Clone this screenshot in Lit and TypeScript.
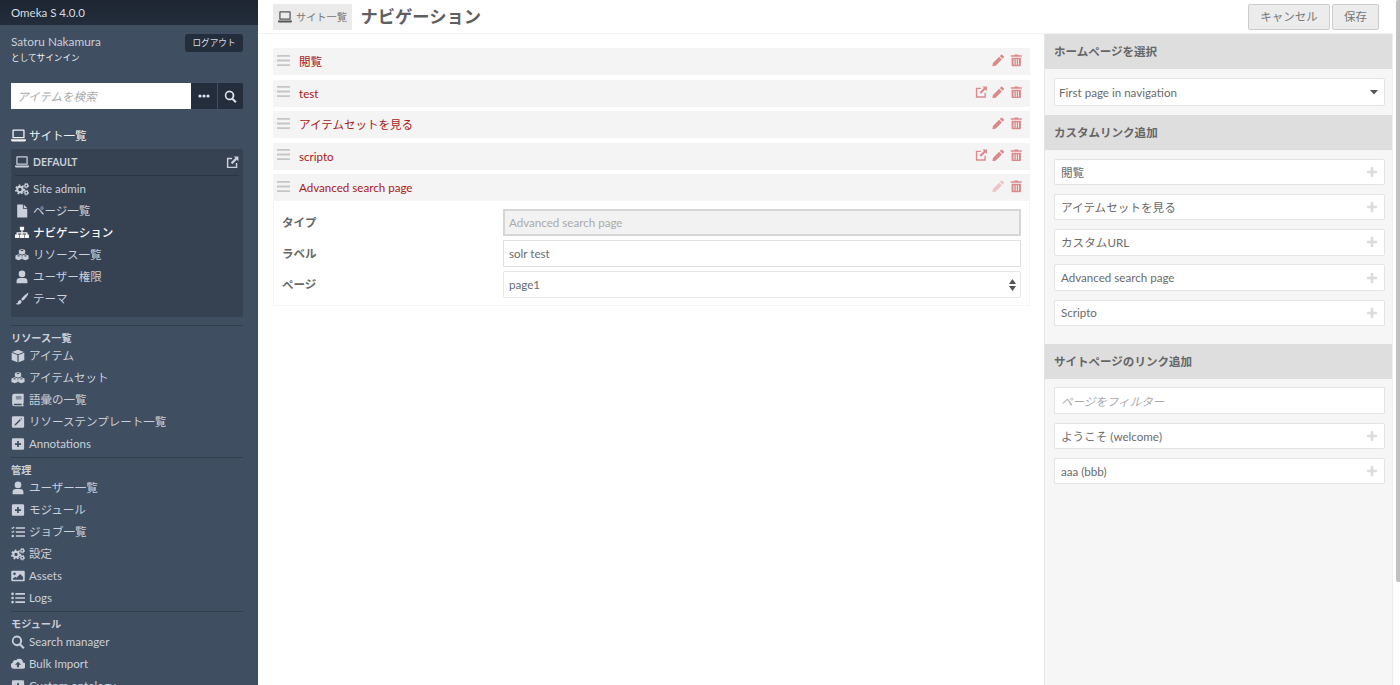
import { LitElement, html, css, svg } from "lit";
import { customElement } from "lit/decorators.js";

const I: Record<string, any> = {
  laptop: svg`<path fill-rule="evenodd" d="M2.500 1.500h11a1 1 0 0 1 1 1V11h-13V2.500a1 1 0 0 1 1-1zm.4 1.400v6.700h10.200V2.900zM0 12h16v.8a1.500 1.500 0 0 1-1.500 1.500H1.500A1.500 1.500 0 0 1 0 12.800z"/>`,
  ext: svg`<path fill="none" stroke="currentColor" stroke-width="1.800" d="M7.500 3H2v11h11V8.500"/><path d="M9.500 .7H15.300v5.800l-2-2-5.500 5.500-1.900-1.900 5.500-5.500z"/>`,
  cogs: svg`<circle cx="5.700" cy="8.600" r="3.100" fill="none" stroke="currentColor" stroke-width="2.400"/><circle cx="5.700" cy="8.600" r="4.700" fill="none" stroke="currentColor" stroke-width="2" stroke-dasharray="2 2"/><circle cx="12.900" cy="4.200" r="1.700" fill="none" stroke="currentColor" stroke-width="1.500"/><circle cx="12.900" cy="4.200" r="2.700" fill="none" stroke="currentColor" stroke-width="1.100" stroke-dasharray="1.200 1.200"/><circle cx="12.900" cy="12.200" r="1.700" fill="none" stroke="currentColor" stroke-width="1.500"/><circle cx="12.900" cy="12.200" r="2.700" fill="none" stroke="currentColor" stroke-width="1.100" stroke-dasharray="1.200 1.200"/>`,
  file: svg`<path d="M2.500 .5h6.500v5h5V15.500H2.500zM10 .5l4 4h-4z"/>`,
  sitemap: svg`<path d="M5.600 .8h4.800v4H8.700v2.200h5.500v2.600h1.800v4H11v-4h1.700V8.500H8.700v1.100h1.700v4H5.600v-4h1.700V8.500H3.300v1.100H5v4H0v-4h1.800V7h5.500V4.800H5.600z"/>`,
  cubes: svg`<path fill-rule="evenodd" d="M8 1l3.600 1.400v3.800L8 7.600 4.400 6.200V2.400zM6 2.800L8 3.600l2-.8L8 2zM4.200 7.200l3.600 1.400v3.900l-3.600 1.400L.5 12.500V8.600zM2.200 9l2 .8 2-.8-2-.8zM11.800 7.200l3.700 1.400v3.900l-3.700 1.400-3.600-1.400V8.600zM9.800 9l2 .8 2-.8-2-.8z"/>`,
  user: svg`<circle cx="8" cy="4.500" r="3.800"/><path d="M1.800 15.200v-2.400A3.800 3.800 0 0 1 5.600 9h4.800a3.800 3.800 0 0 1 3.800 3.800v2.400z"/>`,
  brush: svg`<path d="M15.200 .8c-1.800.7-6.300 4.500-8.200 7.500l1.800 1.700C11.800 7.700 15.900 2.400 15.200 .8zM6.200 9C4.300 9.100 3.500 10.400 3.200 11.900c-.2.900-1.100 1.300-2.200 1.400 1.500 1.700 6 1.800 6.700-2.600z"/>`,
  cube: svg`<path d="M8 .8l6.800 2.500L8 5.900 1.200 3.300zM.8 4.300l6.500 2.600v8.300L.8 12.600zM15.200 4.300v8.300l-6.500 2.600V6.900z"/>`,
  book: svg`<path fill-rule="evenodd" d="M4 .8h10.500v10.500c0 .5-.3.700-.6.800v1.700c.3.200.6.500.6.900v.5H4A2.700 2.700 0 0 1 1.300 12.500V3.500A2.700 2.700 0 0 1 4 .8zm1.500 3.200v1h6.500V4zm0 2.200v1h6.500v-1zM4 12.200a.9.900 0 0 0 0 1.800h8.200v-1.800z"/>`,
  tmpl: svg`<path fill-rule="evenodd" d="M2.500 1.500h11A1.500 1.500 0 0 1 15 3v10a1.500 1.500 0 0 1-1.500 1.500h-11A1.500 1.500 0 0 1 1 13V3a1.500 1.500 0 0 1 1.500-1.500zM10 4.800L4.300 10.500 4 12l1.500-.3 5.700-5.700zM10.800 4l1.200 1.200.7-.7-1.200-1.200z"/>`,
  plus: svg`<path fill-rule="evenodd" d="M2.500 1.500h11A1.500 1.500 0 0 1 15 3v10a1.500 1.500 0 0 1-1.500 1.500h-11A1.500 1.500 0 0 1 1 13V3a1.500 1.500 0 0 1 1.500-1.500zM7 4.500V7H4.500v2H7v2.500h2V9h2.500V7H9V4.500z"/>`,
  tasks: svg`<path d="M5.500 2.600H16v1.800H5.500zM5.500 7.100H16v1.800H5.500zM5.500 11.600H16v1.800H5.500zM.3 3.300l.9-.7.500.6L3.300 1.700l.8.800-2.300 2.300zM.3 7.800l.9-.7.500.6L3.300 6.200l.8.800-2.300 2.300z"/><circle cx="2" cy="12.500" r="1.400"/>`,
  image: svg`<path fill-rule="evenodd" d="M1.500 2h13A1.200 1.200 0 0 1 15.700 3.200v9.600a1.200 1.200 0 0 1-1.200 1.200h-13A1.200 1.200 0 0 1 .3 12.800V3.200A1.200 1.200 0 0 1 1.500 2zM4 4A1.500 1.500 0 1 0 4 7a1.500 1.500 0 0 0 0-3zM2.200 12.300h11.600V9L10.500 5.700 6.300 10 5 8.800l-2.800 2z"/>`,
  list: svg`<circle cx="1.800" cy="3.300" r="1.500"/><circle cx="1.800" cy="8" r="1.500"/><circle cx="1.800" cy="12.700" r="1.500"/><path d="M5 2.400h11v1.800H5zM5 7.100h11v1.800H5zM5 11.800h11v1.800H5z"/>`,
  search: svg`<path fill-rule="evenodd" d="M6.700 .7a6 6 0 0 1 4.800 9.600l4 4-1.700 1.700-4-4A6 6 0 1 1 6.700 .7zm0 2.200a3.800 3.800 0 1 0 0 7.600 3.800 3.800 0 0 0 0-7.600z"/>`,
  cloud: svg`<path fill-rule="evenodd" d="M9.500 2a4.300 4.300 0 0 1 4.100 4.300A3.500 3.500 0 0 1 13 13.300H3.500A3.600 3.600 0 0 1 2.200 6.300 2.600 2.600 0 0 1 5.800 3.700 4.300 4.300 0 0 1 9.500 2zM8 5.300L4.500 8.800h2.300v3h2.400v-3h2.300z"/>`,
  pencil: svg`<path d="M11.600 .9a1 1 0 0 1 1.400 0l2.100 2.100a1 1 0 0 1 0 1.400l-1.600 1.600-3.500-3.500zM9.100 3.400l3.500 3.500-8 8-4.100.7.700-4.100z"/>`,
  trash: svg`<path fill-rule="evenodd" d="M5.800 .5h4.400l.6 1.200H15v1.900H1V1.700h4.200zM2 4.800h12v9.300a1.500 1.500 0 0 1-1.500 1.500h-9A1.500 1.500 0 0 1 2 14.100zm2.500 1.800v7.300h1.100V6.600zm2.900 0v7.300h1.200V6.600zm3 0v7.300h1.100V6.600z"/>`,
  handle: svg`<path d="M0 1h14v2H0zM0 6h14v2H0zM0 11h14v2H0z"/>`,
  addp: svg`<path d="M3.700 0h2.600v3.700H10v2.600H6.300V10H3.700V6.300H0V3.700h3.700z"/>`,
  dots: svg`<circle cx="2" cy="5" r="1.600"/><circle cx="6" cy="5" r="1.600"/><circle cx="10" cy="5" r="1.600"/>`,
  caret: svg`<path d="M0 0h9L4.500 5z"/>`,
  updown: svg`<path d="M3.500 0L7 5H0zM0 7h7l-3.500 5z"/>`,
};

const ic = (n: string, cls = "") => {
  const vb = n === "addp" ? "0 0 10 10" : n === "dots" ? "0 0 12 10" : n === "caret" ? "0 0 9 5" : n === "updown" ? "0 0 7 12" : n === "handle" ? "0 0 14 14" : "0 0 16 16";
  return html`<svg class=${cls} viewBox=${vb} fill="currentColor" aria-hidden="true">${I[n]}</svg>`;
};

const siteNav: [string, string, boolean?][] = [
  ["cogs", "Site admin"], ["file", "ページ一覧"], ["sitemap", "ナビゲーション", true],
  ["cubes", "リソース一覧"], ["user", "ユーザー権限"], ["brush", "テーマ"],
];
const groups: [string, [string, string][]][] = [
  ["リソース一覧", [["cube", "アイテム"], ["cubes", "アイテムセット"], ["book", "語彙の一覧"], ["tmpl", "リソーステンプレート一覧"], ["plus", "Annotations"]]],
  ["管理", [["user", "ユーザー一覧"], ["plus", "モジュール"], ["tasks", "ジョブ一覧"], ["cogs", "設定"], ["image", "Assets"], ["list", "Logs"]]],
  ["モジュール", [["search", "Search manager"], ["cloud", "Bulk Import"], ["plus", "Custom ontology"]]],
];
const rows: [string, boolean, boolean][] = [["閲覧", false, true], ["test", true, false], ["アイテムセットを見る", false, true], ["scripto", true, false], ["Advanced search page", false, false]];

@customElement("app-root")
export class AppRoot extends LitElement {
  static styles = css`
    :host { display: flex; width: 1400px; height: 685px; overflow: hidden; background: #fff;
      font-family: Lato, "Noto Sans CJK JP", sans-serif; font-size: 11.600px; color: #6b6b6b; }
    * { box-sizing: border-box; }
    svg { display: block; flex: none; }
    .side { width: 258px; flex: none; height: 685px; overflow: hidden; background: #404e61; color: #c9d0da; }
    .brand { height: 25px; padding-left: 11px; line-height: 25px; font-size: 11.520px; color: #d8dce2;
      background: linear-gradient(#1c2531, #232d3b); }
    .user { height: 58px; padding: 9px 15px 0 11px; display: flex; justify-content: space-between; align-items: flex-start; }
    .uname { font-size: 11.800px; line-height: 16px; color: #c9d0da; }
    .usub { font-size: 8.640px; line-height: 16px; color: #f2f2f2; }
    .logout { width: 58px; height: 18px; background: #232d3b; border-radius: 3px; color: #d8dce2; font-size: 8.640px;
      line-height: 18px; text-align: center; }
    .search { margin: 0 15px 0 11px; height: 26px; display: flex; gap: 1px; }
    .search input { width: 180px; height: 26px; border: 0; margin-right: -1px; padding: 0 6px; font: italic 11.520px Lato, "Noto Sans CJK JP", sans-serif; background: #fff; outline: none; border-radius: 0; }
    .search input::placeholder { color: #aaa; opacity: 1; }
    .sbtn { flex: 1; background: #232d3b; color: #dfe3e9; display: flex; align-items: center; justify-content: center; }
    .sbtn:last-child { border-radius: 0 2px 2px 0; }
    .sbtn .d { width: 12px; height: 10px; }
    .sbtn .s { width: 13px; height: 13px; }
    .sites { margin: 18px 15px 5px 11px; height: 17px; display: flex; align-items: center; gap: 3px; font-size: 11.520px; color: #f2f2f2; line-height: 17px; }
    .sites svg { width: 15px; height: 15px; }
    .panel { margin: 0 15px 0 11px; height: 168px; background: #364152; border-radius: 2px; padding: 0 4px 7px; }
    .phead { height: 27px; border-bottom: 1px solid #2a3442; margin-bottom: 2px; display: flex; align-items: center; gap: 4px; font-size: 10.400px; font-weight: 700; color: #c9d0da; }
    .phead .l { width: 14px; height: 14px; }
    .phead span { flex: 1; }
    .phead .e { width: 13px; height: 13px; }
    .item { height: 22px; display: flex; align-items: center; line-height: 22px; white-space: nowrap; font-size: 11.520px; }
    .item .ib { width: 18px; flex: none; display: flex; }
    .item svg { width: 14px; height: 14px; }
    .item.on { color: #f7f7f7; font-weight: 500; }
    .group { margin: 8px 15px 0 11px; border-top: 1px solid #323e4e; padding-top: 5px; }
    .group.next { margin-top: 2px; }
    .gtitle { height: 14px; line-height: 14px; font-size: 10.200px; font-weight: 700; color: #c9d0da; }
    .main { flex: 1; min-width: 0; display: flex; flex-direction: column; height: 685px; }
    .top { height: 34px; flex: none; padding: 4px 14px 0 15px; display: flex; align-items: flex-start; border-bottom: 1px solid #f3f3f3; }
    .crumb { height: 26px; width: 79px; background: #ebebeb; display: flex; align-items: center; gap: 4px; padding: 0 0 1px 5px; font-size: 10.200px; color: #777; white-space: nowrap; }
    .crumb svg { width: 14px; height: 14px; color: #555; }
    h1 { margin: 0 0 0 8.500px; flex: 1; font-size: 17.280px; font-weight: 700; line-height: 26px; color: #5f5f5f; }
    .btn { height: 26px; border: 1px solid #ccc; border-radius: 2px; background: #ececec; color: #777; font-size: 11.520px; line-height: 24px; text-align: center; }
    .cancel { width: 82px; margin-right: 2px; }
    .save { width: 47px; }
    .content { flex: 1; display: flex; min-height: 0; }
    .left { flex: 1; min-width: 0; padding: 14px 14px 0 15px; display: flex; flex-direction: column; gap: 4.500px; }
    .row { height: 27px; flex: none; background: #f4f4f4; display: flex; align-items: center; padding: 0 8px 0 4px; color: #a91919; }
    .row .h { width: 13px; height: 13px; color: #c6c6c6; margin: -3px 9px 0 0; }
    .row .t { flex: 1; }
    .row .t.j { font-size: 11.520px; padding-bottom: 2px; }
    .acts { display: flex; gap: 5px; color: #da8a8a; align-items: center; }
    .acts svg { width: 12.500px; height: 12.500px; margin-top: -2px; }
    .acts .lt { color: #efc4c4; }
    .body { margin-top: -4.500px; border: 1px solid #f6f6f6; border-top: 0; height: 105px; padding: 8px 8px 0; display: flex; flex-direction: column; gap: 4px; }
    .field { display: flex; align-items: center; height: 27px; flex: none; }
    .field label { width: 221px; flex: none; font-size: 11.520px; font-weight: 700; color: #666; padding-bottom: 2px; }
    .ctl { flex: 1; height: 27px; border: 1px solid #dfdfdf; padding: 0 5px; display: flex; align-items: center; justify-content: space-between; font: 11.600px Lato, "Noto Sans CJK JP", sans-serif; color: #6b6b6b; background: #fff; border-radius: 0; outline: none; min-width: 0; }
    .ctl.dis { background: #f2f2f2; border: 2px solid #d6d6d6; color: #aaa; padding: 0 4px; }
    .sel { border-radius: 2px; border-color: #e6e6e6; }
    .sel svg { width: 7px; height: 12px; color: #555; margin-right: -1px; }
    .right { width: 349px; flex: none; background: #f6f6f6; border-left: 1px solid #e5e5e5; border-right: 1px solid #ececec; }
    .rh { height: 35.200px; background: #dedede; padding-left: 9px; font-size: 11.520px; font-weight: 700; line-height: 35px; color: #666; }
    .rb { padding: 8.800px 7px 8.800px 9px; display: flex; flex-direction: column; gap: 8.800px; }
    .rb.extra { padding-bottom: 17.600px; }
    .card { height: 26.400px; background: #fff; border: 1px solid #e4e4e4; border-radius: 2px; padding: 0 7px 0 6px; display: flex; align-items: center; justify-content: space-between; color: #6b6b6b; white-space: nowrap; }
    .card.select { height: 28px; padding: 1px 6px 0 4px; }
    .card.select svg { width: 8px; height: 4.500px; color: #555; }
    .card .p { width: 10px; height: 10px; color: #dcdcdc; }
    input.card { width: 100%; padding-top: 1px; font: italic 11.520px Lato, "Noto Sans CJK JP", sans-serif; outline: none; border-radius: 0; }
    input.card::placeholder { color: #aaa; opacity: 1; }
    .sb { width: 7px; flex: none; height: 685px; padding-left: 3px; }
    .thumb { height: 582px; background: #c1c1c1; border-radius: 2px 0 0 2px; }
  `;

  render() {
    return html`
      <aside class="side">
        <div class="brand">Omeka S 4.0.0</div>
        <div class="user">
          <div><div class="uname">Satoru Nakamura</div><div class="usub">としてサインイン</div></div>
          <div class="logout">ログアウト</div>
        </div>
        <div class="search">
          <input placeholder="アイテムを検索" />
          <div class="sbtn">${ic("dots", "d")}</div>
          <div class="sbtn">${ic("search", "s")}</div>
        </div>
        <div class="sites">${ic("laptop")}サイト一覧</div>
        <div class="panel">
          <div class="phead">${ic("laptop", "l")}<span>DEFAULT</span>${ic("ext", "e")}</div>
          ${siteNav.map(([i, t, on]) => html`<div class="item ${on ? "on" : ""}"><span class="ib">${ic(i)}</span>${t}</div>`)}
        </div>
        ${groups.map(([t, items], n) => html`
          <div class="group ${n ? "next" : ""}">
            <div class="gtitle">${t}</div>
            ${items.map(([i, l]) => html`<div class="item"><span class="ib">${ic(i)}</span>${l}</div>`)}
          </div>`)}
      </aside>
      <div class="main">
        <header class="top">
          <div class="crumb">${ic("laptop")}サイト一覧</div>
          <h1>ナビゲーション</h1>
          <div class="btn cancel">キャンセル</div>
          <div class="btn save">保存</div>
        </header>
        <div class="content">
          <section class="left">
            ${rows.map(([t, ext, j], n) => html`
              <div class="row">
                ${ic("handle", "h")}<span class="t ${j ? "j" : ""}">${t}</span>
                <div class="acts">
                  ${ext ? ic("ext") : ""}${ic("pencil", n === 4 ? "lt" : "")}${ic("trash")}
                </div>
              </div>`)}
            <div class="body">
              <div class="field"><label>タイプ</label><input class="ctl dis" value="Advanced search page" disabled /></div>
              <div class="field"><label>ラベル</label><input class="ctl" value="solr test" /></div>
              <div class="field"><label>ページ</label><div class="ctl sel">page1${ic("updown")}</div></div>
            </div>
          </section>
          <section class="right">
            <div class="rh">ホームページを選択</div>
            <div class="rb"><div class="card select">First page in navigation${ic("caret")}</div></div>
            <div class="rh">カスタムリンク追加</div>
            <div class="rb extra">
              ${["閲覧", "アイテムセットを見る", "カスタムURL", "Advanced search page", "Scripto"].map((t) => html`<div class="card">${t}${ic("addp", "p")}</div>`)}
            </div>
            <div class="rh">サイトページのリンク追加</div>
            <div class="rb">
              <input class="card" placeholder="ページをフィルター" />
              ${["ようこそ (welcome)", "aaa (bbb)"].map((t) => html`<div class="card">${t}${ic("addp", "p")}</div>`)}
            </div>
          </section>
        </div>
      </div>
      <div class="sb"><div class="thumb"></div></div>
    `;
  }
}
